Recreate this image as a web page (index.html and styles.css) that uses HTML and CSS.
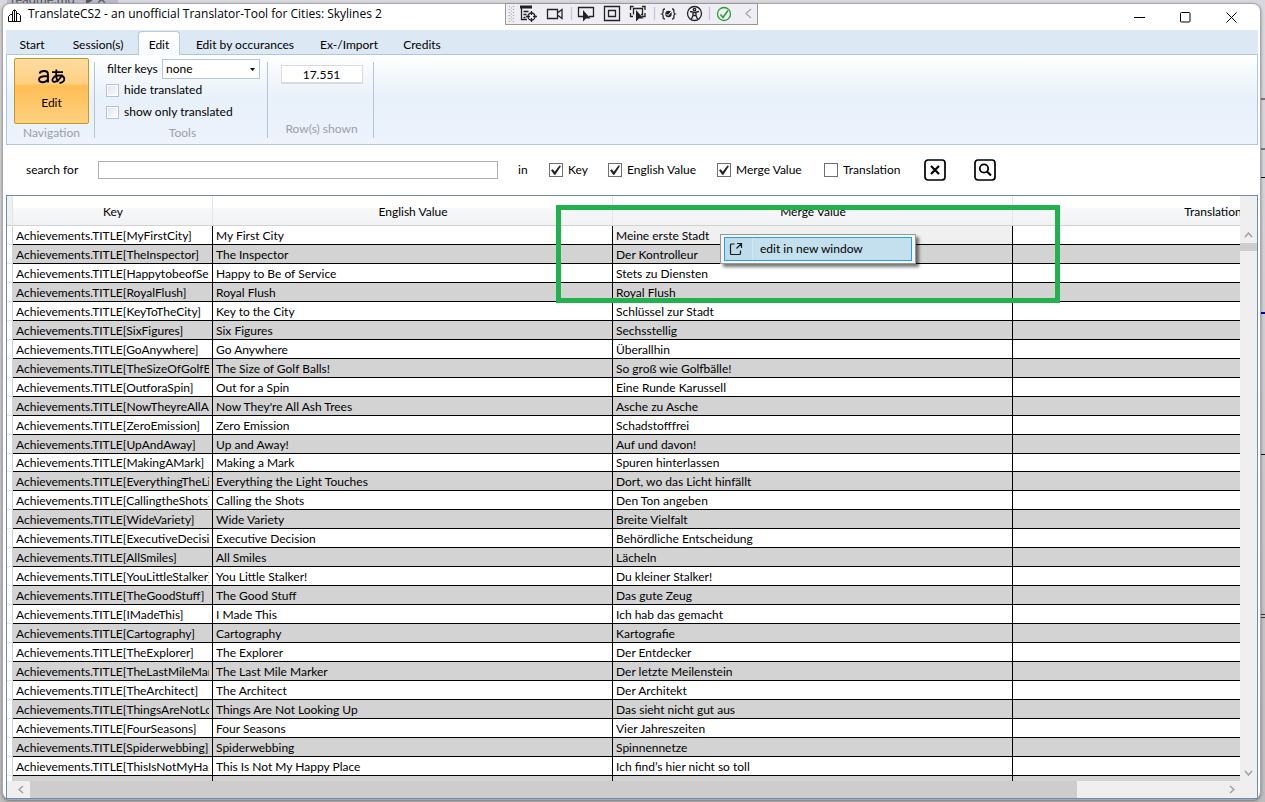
FILE: index.html
```html
<!DOCTYPE html>
<html lang="en">
<head>
<meta charset="utf-8">
<title>TranslateCS2</title>
<link rel="stylesheet" href="styles.css">
</head>
<body>
<div class="behind" aria-hidden="true"><span class="behind-tab">readme.md &nbsp;-▸ ✕</span>
<i class="mark m1"></i><i class="mark m2"></i><i class="mark m3"></i><i class="mark m4"></i><i class="mark m5"></i><i class="mark m6"></i></div>
<div class="window">
<header class="titlebar">
<svg class="app-icon" width="13" height="14" viewBox="0 0 13 14" fill="none" stroke="#000"><path d="M4.500 12.500V2.500L6 1h1l1.500 1.500v10M4.500 5.500H2.500L.5 7.500v5h12V6.500l-2-2h-2M6.500 1v12"/></svg>
<h1 class="title">TranslateCS2 - an unofficial Translator-Tool for Cities: Skylines 2</h1>
<div class="controls">
<button class="ctl" aria-label="Minimize"><svg width="11" height="11" viewBox="0 0 11 11"><path d="M0 5.500h11" stroke="#000"/></svg></button>
<button class="ctl" aria-label="Maximize"><svg width="11" height="11" viewBox="0 0 11 11"><rect x=".5" y=".5" width="9.500" height="9.500" rx="1" fill="none" stroke="#000"/></svg></button>
<button class="ctl" aria-label="Close"><svg width="11" height="11" viewBox="0 0 11 11"><path d="M.5.5l10 10M10.500.5l-10 10" stroke="#000"/></svg></button>
</div>
</header>
<nav class="tabs">
<button class="tab t-start">Start</button><button class="tab t-session">Session(s)</button><button class="tab t-edit active">Edit</button><button class="tab t-occ">Edit by occurances</button><button class="tab t-port">Ex-/Import</button><button class="tab t-credits">Credits</button>
</nav>
<section class="ribbon">
<div class="group nav-group">
<button class="big">
<svg width="28" height="17" viewBox="0 0 28 17" fill="none" stroke="#000"><g stroke-width="1.900"><path d="M1.500 5.500C2.500 2.500 10 1.500 10 6.500V14.500M10 8C4 8 1 8.800 1 11.500c0 4 8 3.500 9-1"/></g><g stroke-width="1.800"><path d="M14 4.200h11M18.500 1.500c-.8 5-.5 9 1.500 12.500M24 6.500c-1.500 4.500-5 7.500-8 7.500-3.500-1-1-6.500 5-6.500 7 0 7 6.500.5 7.500"/></g></svg>
<span>Edit</span></button>
<span class="caption">Navigation</span>
</div>
<div class="group tools-group">
<div class="filter"><label for="filter">filter keys</label><span class="select-wrap"><select id="filter"><option>none</option></select><svg width="5" height="3" viewBox="0 0 5 3"><path d="M0 0h5L2.500 3z"/></svg></span></div>
<label class="opt"><input type="checkbox">hide translated</label>
<label class="opt second"><input type="checkbox">show only translated</label>
<span class="caption">Tools</span>
</div>
<div class="group rows-group">
<input class="count" type="text" value="17.551" readonly aria-label="Row(s) shown">
<span class="caption">Row(s) shown</span>
</div>
</section>
<form class="search">
<label for="q">search for</label>
<input id="q" class="query" type="text">
<span class="in">in</span>
<label class="chk"><input type="checkbox" checked>Key</label>
<label class="chk"><input type="checkbox" checked>English Value</label>
<label class="chk"><input type="checkbox" checked>Merge Value</label>
<label class="chk"><input type="checkbox">Translation</label>
<button class="sq" type="button" aria-label="Clear"><svg width="22" height="22" viewBox="0 0 22 22" fill="none" stroke="#000"><rect x="1" y="1" width="20" height="20" rx="3" stroke-width="1.700"/><path d="M7 7l8 8M15 7l-8 8" stroke-width="2.200"/></svg></button>
<button class="sq" type="button" aria-label="Search"><svg width="22" height="22" viewBox="0 0 22 22" fill="none" stroke="#000"><rect x="1" y="1" width="20" height="20" rx="3" stroke-width="1.700"/><circle cx="10" cy="9.500" r="4.200" stroke-width="1.800"/><path d="M13 12.500l4 4" stroke-width="2.200"/></svg></button>
</form>
<main class="grid">
<div class="view">
<table>
<colgroup><col class="c-head"><col class="c-key"><col class="c-val"><col class="c-val"><col class="c-val"></colgroup>
<thead><tr><th></th><th>Key</th><th>English Value</th><th>Merge Value</th><th>Translation</th></tr></thead>
<tbody>
<tr><td></td><td><span>Achievements.TITLE[MyFirstCity]</span></td><td>My First City</td><td class="current">Meine erste Stadt</td><td></td></tr>
<tr><td></td><td><span>Achievements.TITLE[TheInspector]</span></td><td>The Inspector</td><td>Der Kontrolleur</td><td></td></tr>
<tr><td></td><td><span>Achievements.TITLE[HappytobeofService]</span></td><td>Happy to Be of Service</td><td>Stets zu Diensten</td><td></td></tr>
<tr><td></td><td><span>Achievements.TITLE[RoyalFlush]</span></td><td>Royal Flush</td><td>Royal Flush</td><td></td></tr>
<tr><td></td><td><span>Achievements.TITLE[KeyToTheCity]</span></td><td>Key to the City</td><td>Schlüssel zur Stadt</td><td></td></tr>
<tr><td></td><td><span>Achievements.TITLE[SixFigures]</span></td><td>Six Figures</td><td>Sechsstellig</td><td></td></tr>
<tr><td></td><td><span>Achievements.TITLE[GoAnywhere]</span></td><td>Go Anywhere</td><td>Überallhin</td><td></td></tr>
<tr><td></td><td><span>Achievements.TITLE[TheSizeOfGolfBalls]</span></td><td>The Size of Golf Balls!</td><td>So groß wie Golfbälle!</td><td></td></tr>
<tr><td></td><td><span>Achievements.TITLE[OutforaSpin]</span></td><td>Out for a Spin</td><td>Eine Runde Karussell</td><td></td></tr>
<tr><td></td><td><span>Achievements.TITLE[NowTheyreAllAshTrees]</span></td><td>Now They're All Ash Trees</td><td>Asche zu Asche</td><td></td></tr>
<tr><td></td><td><span>Achievements.TITLE[ZeroEmission]</span></td><td>Zero Emission</td><td>Schadstofffrei</td><td></td></tr>
<tr><td></td><td><span>Achievements.TITLE[UpAndAway]</span></td><td>Up and Away!</td><td>Auf und davon!</td><td></td></tr>
<tr class="short"><td></td><td><span>Achievements.TITLE[MakingAMark]</span></td><td>Making a Mark</td><td>Spuren hinterlassen</td><td></td></tr>
<tr><td></td><td><span>Achievements.TITLE[EverythingTheLightTouches]</span></td><td>Everything the Light Touches</td><td>Dort, wo das Licht hinfällt</td><td></td></tr>
<tr><td></td><td><span>Achievements.TITLE[CallingtheShots]</span></td><td>Calling the Shots</td><td>Den Ton angeben</td><td></td></tr>
<tr><td></td><td><span>Achievements.TITLE[WideVariety]</span></td><td>Wide Variety</td><td>Breite Vielfalt</td><td></td></tr>
<tr><td></td><td><span>Achievements.TITLE[ExecutiveDecision]</span></td><td>Executive Decision</td><td>Behördliche Entscheidung</td><td></td></tr>
<tr><td></td><td><span>Achievements.TITLE[AllSmiles]</span></td><td>All Smiles</td><td>Lächeln</td><td></td></tr>
<tr><td></td><td><span>Achievements.TITLE[YouLittleStalker]</span></td><td>You Little Stalker!</td><td>Du kleiner Stalker!</td><td></td></tr>
<tr><td></td><td><span>Achievements.TITLE[TheGoodStuff]</span></td><td>The Good Stuff</td><td>Das gute Zeug</td><td></td></tr>
<tr><td></td><td><span>Achievements.TITLE[IMadeThis]</span></td><td>I Made This</td><td>Ich hab das gemacht</td><td></td></tr>
<tr><td></td><td><span>Achievements.TITLE[Cartography]</span></td><td>Cartography</td><td>Kartografie</td><td></td></tr>
<tr><td></td><td><span>Achievements.TITLE[TheExplorer]</span></td><td>The Explorer</td><td>Der Entdecker</td><td></td></tr>
<tr><td></td><td><span>Achievements.TITLE[TheLastMileMarker]</span></td><td>The Last Mile Marker</td><td>Der letzte Meilenstein</td><td></td></tr>
<tr><td></td><td><span>Achievements.TITLE[TheArchitect]</span></td><td>The Architect</td><td>Der Architekt</td><td></td></tr>
<tr><td></td><td><span>Achievements.TITLE[ThingsAreNotLookingUp]</span></td><td>Things Are Not Looking Up</td><td>Das sieht nicht gut aus</td><td></td></tr>
<tr><td></td><td><span>Achievements.TITLE[FourSeasons]</span></td><td>Four Seasons</td><td>Vier Jahreszeiten</td><td></td></tr>
<tr><td></td><td><span>Achievements.TITLE[Spiderwebbing]</span></td><td>Spiderwebbing</td><td>Spinnennetze</td><td></td></tr>
<tr><td></td><td><span>Achievements.TITLE[ThisIsNotMyHappyPlace]</span></td><td>This Is Not My Happy Place</td><td>Ich find’s hier nicht so toll</td><td></td></tr>
<tr><td></td><td></td><td></td><td></td><td></td></tr>
</tbody>
</table>
</div>
<div class="vbar"><svg width="9" height="6" viewBox="0 0 9 6"><path d="M1 5l3.500-4L8 5"/></svg><i class="vthumb"></i><svg class="down" width="9" height="6" viewBox="0 0 9 6"><path d="M1 1l3.500 4L8 1"/></svg></div>
<div class="hbar"><svg width="6" height="9" viewBox="0 0 6 9"><path d="M5 1L1 4.500 5 8"/></svg><i class="hthumb"></i><svg class="right" width="6" height="9" viewBox="0 0 6 9"><path d="M1 1l4 3.500L1 8"/></svg></div>
</main>
</div>

<div class="debugbar">
<svg width="253" height="22" viewBox="0 0 253 22" fill="none" stroke="#222" stroke-width="1.300">
<path d="M4.500 3v16M8.500 3v16" stroke="#aaa" stroke-dasharray="1 2"/><path d="M6.500 4.500v14" stroke="#aaa" stroke-dasharray="1 2"/>
<path d="M15 4h12" stroke-width="3"/><path d="M16.500 4v12.500H22M18.500 8.500h5M18.500 11.500h3M18.500 14.500h2"/><circle cx="26.500" cy="13.500" r="3.500"/><path d="M26.500 8v4M26.500 15v4M21 13.500h4M28 13.500h4"/>
<path d="M42.500 6.500h10v9h-10zM53 9.500l4-3v9l-4-3"/>
<path d="M66.500 4v13M149.500 4v13M204.500 4v13" stroke="#c5c8da"/>
<path d="M78 13.500h-4.500v-9h15v9H84"/><path d="M78 7v11.500l3-3h4.500z" fill="#222" stroke="none"/>
<path d="M99.500 3.500h15v14h-15zM103.500 7.500h7v6h-7z"/>
<path d="M125.500 7V3.500h3M137 3.500h3V7M140 10v3.500h-3M128 13.500h-2.500V10M128.500 11.500v-6h9v6h-1.500"/><path d="M131 7v11.500l3-3h4.500z" fill="#222" stroke="none"/>
<path d="M160 6c-4 0 0 4-3 5 3 1-1 5 3 5M167 6c4 0 0 4 3 5-3 1 1 5-3 5"/><circle cx="163.500" cy="11" r="3.200" fill="#222" stroke="none"/><path d="M161.500 11l1.500 1.500 3-3.500" stroke="#fff" stroke-width="1"/>
<circle cx="189.500" cy="10.500" r="7"/><circle cx="189.500" cy="6.500" r="1.200"/><path d="M185 8.500l4.500 1 4.500-1M188 9.500v3L186.500 16M191 9.500v3l1.500 3.500M188 12.500h3"/>
<circle cx="219" cy="11" r="6.500" stroke="#2e9a35"/><path d="M215.500 11.500l2.500 3 5-7" stroke="#2e9a35" stroke-width="1.500"/>
<path d="M246 6l-5 4.500 5 4.500" stroke="#aaa"/>
</svg>
</div>
<div class="menu"><button class="item"><svg width="14" height="14" viewBox="0 0 14 14" fill="none" stroke="#1a1a1a" stroke-width="1.200"><path d="M5.500 2H2.500Q1.500 2 1.500 3v8.500q0 1 1 1H10q1.500 0 1.500-1V8.500M8 1.500h4.500V6M12.500 1.500L7.500 6.500"/></svg><span>edit in new window</span></button></div>
<div class="highlight"></div>
</body>
</html>
```
FILE: styles.css
```css
* { box-sizing: border-box; }
body {
  margin: 0;
  height: 100vh;
  padding: 3px 4px 2px 2px;
  overflow: hidden;
  position: relative;
  background: linear-gradient(#d8d8de, #cfcfd3 40%, #bdbdbd);
  font: 12px/16px Lato, "Open Sans", sans-serif;
  color: #000;
}
button, input, select { font: inherit; color: inherit; margin: 0; padding: 0; }
button { background: none; border: 0; }
svg { display: block; }

.behind { position: absolute; inset: 0; overflow: hidden; }
.behind-tab { position: absolute; left: 7px; top: -9px; width: 111px; padding-left: 4px; background: #b9bccb; color: #555; font-size: 13px; white-space: nowrap; }
.mark { position: absolute; right: 0; width: 4px; height: 1px; background: #111; }
.m1 { top: 98px; height: 2px; background: #777; }
.m2 { top: 148px; height: 2px; background: #777; }
.m3 { top: 177px; }
.m4 { top: 312px; height: 2px; background: #00b; }
.m5 { top: 454px; }
.m6 { top: 614px; height: 4px; border: solid #333; border-width: 1px 0; background: none; }

.window {
  position: relative;
  height: 100%;
  display: flex;
  flex-direction: column;
  padding: 0 2px 0 3px;
  background: #fff;
  border: 1px solid #a8a8ac;
  border-radius: 8px;
  box-shadow: 0 1px 3px #0006;
}
.titlebar { display: flex; height: 26px; flex: none; padding-left: 2px; }
.app-icon { margin: 5px 7px 0 0; }
.title { margin: 2px 0 0; font: 400 12px/16px "Open Sans", sans-serif; flex: 1; }
.controls { display: flex; gap: 34px; padding: 2px 21px 0 0; }
.ctl { width: 12px; height: 22px; display: grid; place-items: center; }

.tabs { display: flex; flex: none; height: 24px; padding-top: 1px; background: #dde8f5; }
.tab { height: 24px; text-align: center; white-space: nowrap; border: 1px solid transparent; border-bottom: 0; padding-top: 2px; }
.tab.active { background: linear-gradient(#fff, #f8fbff); border-color: #b5cbe0; border-radius: 4px 4px 0 0; position: relative; z-index: 1; }
.t-start { width: 52px; }
.t-session { width: 80px; }
.t-edit { width: 42px; }
.t-occ { width: 130px; }
.t-port { width: 78px; }
.t-credits { width: 68px; }

.ribbon {
  display: flex;
  flex: none;
  height: 91px;
  padding: 3px 0 0 7px;
  border: 1px solid #b2c6da;
  background: linear-gradient(#fff, #e8f0f9 50%, #eef3fc);
}
.group { position: relative; display: flex; flex-direction: column; align-items: center; height: 82px; }
.group::after { content: ""; position: absolute; right: 0; top: 4px; width: 1px; height: 76px; background: #b2c6da; }
.nav-group { width: 81px; padding-right: 6px; }
.tools-group { width: 173px; align-items: flex-start; padding: 1px 9px 0 11px; }
.rows-group { width: 106px; padding: 7px 0 0 1px; }
.caption { margin-top: auto; color: #9a9fa8; align-self: center; white-space: nowrap; line-height: 14px; }
.rows-group .caption { margin-bottom: 4px; }
.big {
  width: 75px;
  height: 66px;
  display: flex;
  flex-direction: column;
  align-items: center;
  padding-top: 9px;
  gap: 10px;
  border: 1px solid #c19a2e;
  border-radius: 2px;
  background: linear-gradient(#fedba0, #ffcf83 38%, #ffbe55 42%, #ffd180);
}
.filter { display: flex; gap: 4px; align-items: center; white-space: nowrap; padding-left: 1px; }
.filter label { width: 51px; }
.select-wrap { position: relative; }
.select-wrap svg { position: absolute; right: 5px; top: 9px; pointer-events: none; }
select { display: block; appearance: none; width: 98px; height: 20px; padding: 0 3px; border: 1px solid #b2c6da; border-radius: 0; background: #fff; }
.opt { display: flex; gap: 5px; align-items: center; height: 22px; white-space: nowrap; }
.opt input { appearance: none; width: 13px; height: 13px; border: 1px solid #b5bfdc; background: linear-gradient(135deg, #dfe0ee, #fff); box-shadow: inset 0 0 0 1px #fff; }
.count { width: 82px; height: 19px; text-align: center; border: 1px solid #d5dce5; border-bottom-width: 2px; background: #fff; }

.search {
  flex: none;
  height: 50px;
  display: grid;
  grid-template-columns: 72px 400px 20px 31px 59px 109px 107px 100px 50px 22px;
  align-items: center;
  padding-left: 20px;
  white-space: nowrap;
}
.in { grid-column: 4; }
.query { height: 18px; border: 1px solid #abadb3; background: #fff; }
.chk { display: flex; align-items: center; gap: 5px; }
.chk input { appearance: none; width: 14px; height: 14px; border: 1px solid #707070; display: grid; place-items: center; }
.chk input:checked::after { content: ""; width: 10px; height: 10px; background: #222; clip-path: polygon(0 52%, 18% 42%, 38% 68%, 84% 4%, 100% 10%, 44% 98%, 32% 98%); }
.sq { width: 22px; height: 22px; }

.grid {
  flex: 1;
  min-height: 0;
  display: grid;
  grid-template-columns: minmax(0, 1fr) 17px;
  grid-template-rows: minmax(0, 1fr) 17px;
  border: 1px solid #6a8cb4;
  background: #efefef;
}
.view { overflow: hidden; background: #fff; }
table { table-layout: fixed; width: 1406px; border-spacing: 0; }
.c-head { width: 6px; }
.c-key { width: 200px; }
.c-val { width: 400px; }
th { height: 30px; padding: 2px 0 0 1px; font-weight: 400; border-right: 1px solid #e4e5e8; border-bottom: 1px solid #d0d2d4; background: linear-gradient(#fff 40%, #f7f8fa 41%, #f1f2f4); }
th:first-child { background: #f0f0f0; padding: 0; }
td { height: 19px; padding: 2px 3px 0; line-height: 16px; white-space: nowrap; overflow: hidden; border-right: 1px solid #000; border-bottom: 1px solid #000; }
td span { display: block; overflow: hidden; }
.short td { height: 18px; padding-top: 1px; }
tbody tr:nth-child(even) td { background: #d3d3d3; }
tbody tr td:first-child { padding: 0; background: #fff; border-right-color: #d0d0d0; border-bottom-color: #e4e4e4; }
tbody .current { background: #f0f0f0; }
.vbar, .hbar { display: flex; align-items: center; }
.vbar { flex-direction: column; padding: 36px 0 5px; }
.vbar svg, .hbar svg { fill: none; stroke: #a0a0a0; stroke-width: 1.5; }
.vthumb { width: 17px; height: 8px; margin-top: 5px; background: #cdcdcd; }
.down { margin-top: auto; }
.hbar { grid-column: 1 / 3; padding: 0 22px 0 11px; }
.hthumb { width: 86%; height: 17px; margin-left: 6px; background: #cdcdcd; }
.right { margin-left: auto; }

.debugbar { position: absolute; left: 505px; top: 3px; width: 253px; height: 22px; background: #eeeef4; outline: 1px solid #999; outline-offset: -1px; }
.menu { position: absolute; left: 720px; top: 234px; width: 196px; padding: 2px 3px; background: #f5f5f5; border: 1px solid #979797; box-shadow: 3px 3px 3px #0008; }
.item { width: 100%; height: 24px; display: flex; align-items: center; padding-left: 4px; text-align: left; border: 1px solid #26a0da; background: linear-gradient(90deg, #bedcec 27px, #d0e6f2 27px 28px, #c4e0ef 28px); }
.item span { margin-left: 17px; }
.highlight { position: absolute; left: 556px; top: 205px; width: 504px; height: 98px; border: 5px solid #22b14c; pointer-events: none; }
```
